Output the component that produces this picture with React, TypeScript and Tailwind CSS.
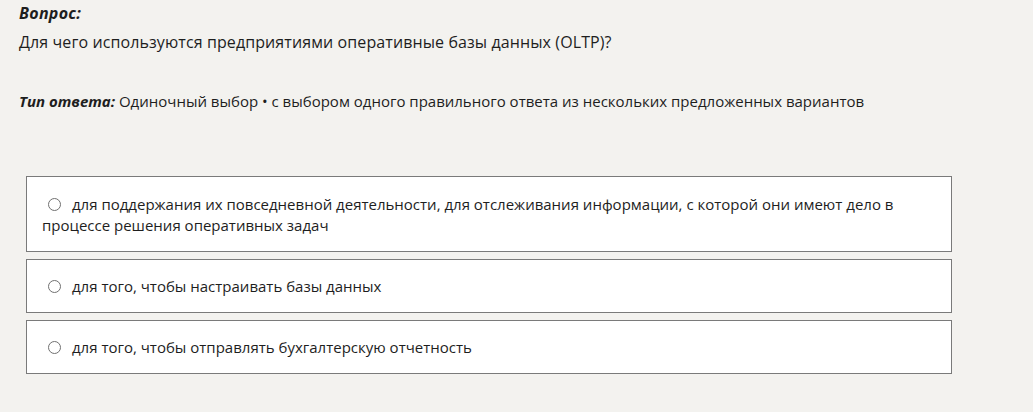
export default function App() {
  const options = [
    "для поддержания их повседневной деятельности, для отслеживания информации, с которой они имеют дело в процессе решения оперативных задач",
    "для того, чтобы настраивать базы данных",
    "для того, чтобы отправлять бухгалтерскую отчетность",
  ];
  return (
    <div className="min-h-[412px] w-[1033px] bg-[#f3f2ef] text-[#1e1e1e] font-['Open_Sans',sans-serif]">
      <div className="pl-[19px] pt-[2px]">
        <div className="text-[16px] leading-[22px] font-bold italic tracking-[0.3px]">Вопрос:</div>
        <div className="text-[16px] leading-[22px] mt-[7px] tracking-[0.1px]">
          Для чего используются предприятиями оперативные базы данных (OLTP)?
        </div>
        <div className="text-[15px] leading-[22px] mt-[37px]">
          <span className="font-bold italic">Тип ответа:</span> Одиночный выбор • с выбором одного правильного ответа из нескольких предложенных вариантов
        </div>
      </div>
      <div className="ml-[26px] mt-[64px] w-[926px] flex flex-col gap-[7px]">
        {options.map((o, i) => (
          <div
            key={i}
            className={`border border-[#7a7a7a] bg-white pl-[15px] pr-[30px] text-[15px] leading-[21px] ${i === 0 ? "pt-[17px] pb-[15px]" : "pt-[16px] pb-[15px]"}`}
          >
            <span className="inline-block align-[-1px] w-[13px] h-[13px] rounded-full border border-[#707070] ml-[6px] mr-[11px]"></span>
            {o}
          </div>
        ))}
      </div>
    </div>
  );
}
